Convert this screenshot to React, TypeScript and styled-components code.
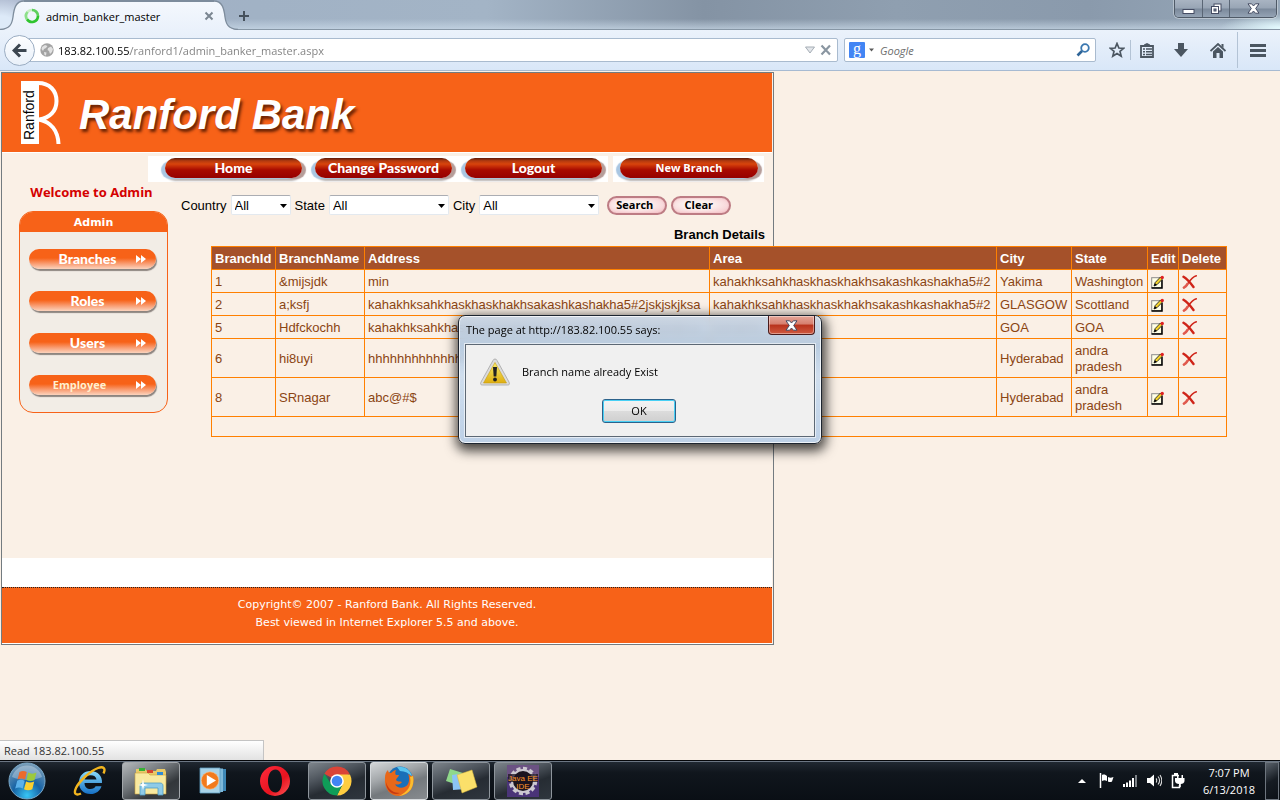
import React from "react";
import styled, { createGlobalStyle, css } from "styled-components";

const UI = `"Open Sans", "Noto Sans", sans-serif`;
const ARIAL = `"Liberation Sans", Arial, sans-serif`;
const VERDANA = `"DejaVu Sans", Verdana, sans-serif`;
const GOTHIC = `Lato, "Century Gothic", sans-serif`;
const LINEN = "#faf0e6";
const ORANGE = "#f76218";

const Global = createGlobalStyle`
  * { box-sizing: border-box; }
  html, body, #root { height: 100%; }
  body { margin: 0; background: ${LINEN}; font-family: ${ARIAL}; font-size: 13px; overflow: hidden; }
  button, input, select { font: inherit; margin: 0; }
  a { text-decoration: none; color: inherit; }
  svg { display: block; flex: none; }
`;

const Desktop = styled.div`
  display: flex;
  flex-direction: column;
  height: 100vh;
`;

/* ---------- browser chrome ---------- */

const TitleBar = styled.header`
  display: flex;
  align-items: flex-start;
  height: 30px;
  background:
    radial-gradient(ellipse 60px 14px at 100% 28px, #e4fbff, rgba(228, 251, 255, 0)),
    radial-gradient(ellipse 50px 34px at 0 26px, #ddeaf8 30%, rgba(221, 234, 248, 0)),
    linear-gradient(180deg, rgba(255, 255, 255, 0) 65%, rgba(206, 222, 236, 0.65)),
    linear-gradient(90deg, #a3aec6, #a1b2c5 20%, #a3b4c6 38%, #8493a4 55%, #8f9fb0 70%, #8a9aac 85%, #97a8b9);
  border-bottom: 1px solid #8797a6;
`;

const Tab = styled.div`
  display: flex;
  height: 30px;
  font-family: ${UI};
  font-size: 11px;
  color: #000;
`;

const TabBody = styled.div`
  display: flex;
  align-items: center;
  gap: 6px;
  width: 190px;
  height: 30px;
  background: linear-gradient(#f4f8fd, #eaf1fb);
  border-top: 2px solid #7d8c9c;
`;

const TabTitle = styled.span`
  flex: 1;
  white-space: nowrap;
  font-size: 11px;
`;

const PlainButton = styled.button`
  display: flex;
  align-items: center;
  justify-content: center;
  padding: 0;
  border: 0;
  background: none;
`;

const NewTab = styled(PlainButton)`
  width: 12px;
  height: 30px;
  padding-top: 2px;
`;

const WindowControls = styled.div`
  display: flex;
  margin-left: auto;
  margin-right: 3px;
  height: 18px;
  border: 1px solid #4f5a67;
  border-top: 0;
  border-radius: 0 0 5px 5px;
  box-shadow: 0 0 0 1px rgba(255, 255, 255, 0.35);
`;

const WindowButton = styled(PlainButton)<{ $w: number }>`
  width: ${(p) => p.$w}px;
  height: 17px;
  background: linear-gradient(#a9b4c2 0, #98a5b5 48%, #7b899b 52%, #94a3b4);
  & + & { border-left: 1px solid #5a6675; }
  &:last-child { border-radius: 0 0 4px 0; }
  &:first-child { border-radius: 0 0 0 4px; }
`;

const NavBar = styled.nav`
  display: flex;
  align-items: center;
  height: 41px;
  padding: 0 2px 0 4px;
  background: linear-gradient(#ebf2fb, #d9e7f8);
  border-bottom: 1px solid #a6bad2;
  font-family: ${UI};
  font-size: 11px;
`;

const BackButton = styled(PlainButton)`
  z-index: 1;
  width: 31px;
  height: 31px;
  margin-right: -8px;
  border: 1px solid #9badc2;
  border-radius: 50%;
  background: linear-gradient(#fdfeff, #e9f0f9);
`;

const Field = styled.div`
  display: flex;
  align-items: center;
  height: 24px;
  border: 1px solid #a9bbcf;
  border-radius: 2px;
  background: #fff;
`;

const UrlField = styled(Field)`
  flex: 1;
  gap: 4px;
  padding: 0 6px 0 12px;
`;

const UrlInput = styled.input`
  flex: 1;
  min-width: 0;
  padding: 0;
  border: 0;
  outline: 0;
  background: linear-gradient(90deg, #000 72px, #7e7e7e 72px) text;
  -webkit-text-fill-color: transparent;
`;

const SearchField = styled(Field)`
  width: 252px;
  margin: 0 8px 0 6px;
  padding: 0 4px;
  gap: 4px;
`;

const SearchInput = styled.input`
  flex: 1;
  min-width: 0;
  padding: 0 0 0 2px;
  border: 0;
  outline: 0;
  background: none;
  font-style: italic;
  &::placeholder { color: #6d6d6d; opacity: 1; }
`;

const NavIcons = styled.div`
  display: flex;
  align-items: center;
  height: 100%;
`;

const NavIcon = styled(PlainButton)<{ $w: number }>`
  width: ${(p) => p.$w}px;
  height: 26px;
`;

const NavRule = styled.span<{ $full?: boolean }>`
  width: 1px;
  height: ${(p) => (p.$full ? "36px" : "20px")};
  background: #b3c3d5;
`;

/* ---------- page ---------- */

const Viewport = styled.main`
  position: relative;
  flex: 1;
  min-height: 0;
  overflow: hidden;
  padding: 1px;
`;

const Site = styled.div`
  width: 100%;
  max-width: 773px;
  border: 1px solid #737b80;
  padding-right: 1px;
`;

const Banner = styled.div`
  display: flex;
  align-items: center;
  gap: 15px;
  height: 80px;
  padding-left: 18px;
  background: ${ORANGE};
  border-bottom: 1px solid #fff;
`;

const BankName = styled.h1`
  margin: 4px 0 0;
  color: #fff;
  font: italic bold 42px/48px ${ARIAL};
  text-shadow: 2px 3px 3px rgba(80, 24, 0, 0.85);
`;

const MenuRow = styled.div`
  display: flex;
  gap: 5px;
  padding: 3px 0 0 146px;
`;

const MenuStrip = styled.div`
  display: flex;
  height: 26px;
  padding: 0 0 0 10px;
  background: #fff;
`;

const MenuSlot = styled.span<{ $compact?: boolean }>`
  display: flex;
  width: ${(p) => (p.$compact ? "151px" : "150px")};
  padding: 2px 6px 0 7px;
  background: #fff;
`;

const pill = css`
  display: flex;
  align-items: center;
  justify-content: center;
  height: 20px;
  border-radius: 10px;
  cursor: pointer;
`;

const MenuPill = styled.a<{ $small?: boolean }>`
  ${pill}
  flex: 1;
  border: 0;
  padding: 0;
  background: linear-gradient(#5c1a08 0, #b23a10 14%, #d8440c 30%, #a80a00 60%, #950000);
  box-shadow: -5px 2px 1px -1px #a9c6e2, 5px 2px 1px -1px #b59c98, 0 3px 2px #b9b4b2;
  color: #fff;
  font: ${(p) => (p.$small ? `bold 11px/16px ${UI}` : `900 14px/16px ${GOTHIC}`)};
`;

const Columns = styled.div`
  display: flex;
  gap: 13px;
  height: 376px;
  padding-left: 17px;
`;

const Sidebar = styled.aside`
  flex: none;
  width: 149px;
`;

const Welcome = styled.p`
  margin: 0;
  padding: 2px 4px 11px 0;
  text-align: center;
  color: #d40000;
  white-space: nowrap;
  font: bold 13px/16px ${UI};
`;

const Panel = styled.section`
  height: 202px;
  border: 1px solid ${ORANGE};
  border-radius: 14px;
  background: #f2ede6;
  overflow: hidden;
`;

const PanelTitle = styled.h2`
  margin: 0 0 17px;
  height: 20px;
  background: ${ORANGE};
  color: #fff;
  text-align: center;
  font: bold 11px/22px ${VERDANA};
`;

const PanelList = styled.ul`
  display: flex;
  flex-direction: column;
  gap: 22px;
  margin: 0;
  padding: 0 11px 0 9px;
  list-style: none;
`;

const PanelLink = styled.a<{ $warm?: boolean }>`
  ${pill}
  position: relative;
  padding-right: ${(p) => (p.$warm ? "26px" : "10px")};
  background: linear-gradient(${ORANGE} 0, ${ORANGE} 45%, #f9a077 75%, #fbd3bd);
  box-shadow: 1px 2px 1px #8d8580;
  color: ${(p) => (p.$warm ? "#fff0cf" : "#fff")};
  font: ${(p) => (p.$warm ? `bold 11px/18px ${UI}` : `900 14px/18px ${GOTHIC}`)};
  svg { position: absolute; right: 10px; top: 6px; }
`;

const Content = styled.section`
  flex: 1;
  min-width: 0;
  padding-top: 13px;
`;

const Filters = styled.form`
  display: flex;
  align-items: center;
  height: 20px;
  white-space: nowrap;
`;

const FilterLabel = styled.label`
  margin-right: 4px;
`;

const SelectBox = styled.span<{ $w: number }>`
  position: relative;
  width: ${(p) => p.$w}px;
  margin-right: 4px;
  svg { position: absolute; right: 4px; top: 9px; pointer-events: none; }
`;

const Select = styled.select`
  appearance: none;
  display: block;
  width: 100%;
  height: 20px;
  padding: 0 3px;
  border: 1px solid #e3e9ef;
  border-top-color: #abadb3;
  border-radius: 2px;
  background: #fff;
  color: #000;
`;

const PinkButton = styled.button`
  ${pill}
  width: 60px;
  height: 19px;
  margin-left: 4px;
  padding: 0 5px 0 0;
  border: 2px solid #bd7c84;
  background: radial-gradient(ellipse at 45% 45%, #fdf3f1 30%, #f5c9cd 90%);
  box-shadow: inset 0 0 2px #f1b6bd;
  color: #000;
  font: bold 11px/14px ${UI};
`;

const Caption = styled.h2`
  margin: 12px 7px 3px 0;
  text-align: right;
  font: bold 13px/16px ${ARIAL};
  color: #000;
`;

const Grid = styled.table`
  width: 1015px;
  margin-left: 30px;
  table-layout: fixed;
  border-collapse: collapse;
  background: ${LINEN};
  color: #8b4513;
  font: 13px/16px ${ARIAL};
  th, td { border: 1px solid #ff8000; padding: 4px 3px 2px; text-align: left; }
  th { background: #a5512a; color: #fff; white-space: nowrap; }
`;

const Cell = styled.td<{ $wrap?: boolean }>`
  white-space: ${(p) => (p.$wrap ? "normal" : "nowrap")};
  overflow: hidden;
`;

const PagerCell = styled.td`
  height: 20px;
`;

const Spacer = styled.div`
  height: 29px;
  background: #fff;
`;

const Footer = styled.footer`
  height: 57px;
  padding-top: 8px;
  border-top: 1px dotted #222;
  border-bottom: 1px solid #fff;
  background: ${ORANGE};
  color: #fff;
  text-align: center;
  font: 11px/18px ${VERDANA};
`;

const Line = styled.p`
  margin: 0;
`;

const StatusBar = styled.div`
  position: absolute;
  left: 0;
  bottom: 0;
  width: 264px;
  height: 20px;
  padding-left: 4px;
  border: 1px solid #c4c4c4;
  border-width: 1px 1px 0 0;
  background: linear-gradient(#fff, #e2e2e2);
  color: #333;
  font: 11px/20px ${UI};
`;

/* ---------- alert ---------- */

const Dialog = styled.div`
  position: absolute;
  z-index: 2;
  left: 50%;
  top: 244px;
  width: 364px;
  margin-left: -182px;
  padding: 0 6px;
  border: 1px solid #1d2530;
  border-radius: 7px;
  background: linear-gradient(rgba(196, 211, 229, 0.86), rgba(176, 199, 223, 0.88) 30px, rgba(205, 221, 238, 0.95) 60px, #bdd0e6);
  backdrop-filter: blur(4px);
  box-shadow: inset 0 0 0 1px rgba(255, 255, 255, 0.75), 1px 4px 12px 3px rgba(0, 0, 0, 0.72);
  padding-bottom: 6px;
  font: 11px/16px ${UI};
  color: #000;
`;

const DialogHead = styled.div`
  display: flex;
  align-items: flex-start;
  justify-content: space-between;
  height: 28px;
`;

const DialogTitle = styled.span`
  padding: 6px 0 0 1px;
  white-space: nowrap;
`;

const DialogClose = styled(PlainButton)`
  width: 47px;
  height: 19px;
  border: 1px solid #4a1b1b;
  border-top: 0;
  border-radius: 0 0 4px 4px;
  background: linear-gradient(#e5a698 0, #d67e6e 45%, #b8321c 50%, #cf5a41);
  box-shadow: inset 0 0 0 1px rgba(255, 255, 255, 0.4);
`;

const DialogBody = styled.div`
  height: 93px;
  padding: 13px 16px 0 14px;
  border: 1px solid #5d6874;
  background: #f0f0f0;
  box-shadow: 0 0 0 1px rgba(255, 255, 255, 0.6);
`;

const DialogMessage = styled.div`
  display: flex;
  align-items: center;
  gap: 12px;
  height: 28px;
`;

const OkButton = styled.button`
  display: block;
  width: 74px;
  height: 24px;
  margin: 13px auto 0;
  padding: 0;
  border: 1px solid #2c628b;
  border-radius: 3px;
  background: linear-gradient(#f3f3f3 0, #ebebeb 50%, #dcdcdc 50%, #cfcfcf);
  box-shadow: inset 0 0 0 1px #48d0f5;
  color: #000;
`;

/* ---------- taskbar ---------- */

const TaskBar = styled.footer`
  display: flex;
  align-items: center;
  gap: 4px;
  height: 40px;
  padding-right: 1px;
  border-top: 1px solid #05070a;
  box-shadow: inset 0 1px 0 #6b7683;
  background: linear-gradient(#222a33 0, #10161d 30%, #0a0f15);
`;

const TaskButton = styled.button<{ $state?: "open" | "active" | "light" }>`
  display: flex;
  align-items: center;
  justify-content: center;
  width: 58px;
  height: 38px;
  padding: 0;
  border: 1px solid transparent;
  border-radius: 3px;
  background: none;
  ${(p) => p.$state === "open" && css`
    border-color: #8e959c;
    background: linear-gradient(160deg, #7d848b 0, #4d545c 35%, #262c33 60%, #2f363e);
  `}
  ${(p) => p.$state === "light" && css`
    border-color: #a3a7ab;
    background: linear-gradient(150deg, #b4b8bb 0, #72777b 40%, #33373b 70%, #3c4146);
  `}
  ${(p) => p.$state === "active" && css`
    border-color: #d6dadd;
    background: linear-gradient(160deg, #d3d6d8 0, #a3a7aa 35%, #74797d 60%, #888c90);
  `}
`;

const StartButton = styled(TaskButton)`
  width: 54px;
  margin-right: 2px;
`;

const Tray = styled.div`
  display: flex;
  align-items: center;
  margin-left: auto;
`;

const TrayIcons = styled.div`
  display: flex;
  align-items: center;
  gap: 8px;
  margin-right: 7px;
`;

const TrayButton = styled(PlainButton)`
  width: 16px;
  height: 20px;
`;

const Clock = styled.div`
  width: 72px;
  text-align: center;
  color: #fff;
  font: 11px/17px ${UI};
`;

const ShowDesktop = styled.button`
  width: 14px;
  height: 38px;
  padding: 0;
  border: 1px solid #6d757e;
  background: linear-gradient(150deg, #59616a, #161c23 50%, #0c1117);
`;

/* ---------- drawings ---------- */

const TabEdge = ({ flip }: { flip?: boolean }) => (
  <svg width="24" height="30" viewBox="0 0 24 30" transform={flip ? "scale(-1 1)" : undefined}>
    <defs>
      <linearGradient id={flip ? "edgeR" : "edgeL"} x1="0" y1="0" x2="0" y2="1">
        <stop offset="0" stopColor="#f4f8fd" />
        <stop offset="1" stopColor="#eaf1fb" />
      </linearGradient>
    </defs>
    <path d="M0 30 C10 29 12 24 13 17 C14 8 16 1 24 1 L24 30 Z" fill={`url(#${flip ? "edgeR" : "edgeL"})`} />
    <path d="M0 29.500 C10 29 12 24 13 17 C14 8 16 1 24 1" fill="none" stroke="#7d8c9c" strokeWidth="1.300" />
  </svg>
);

const Spinner = () => (
  <svg width="16" height="16" viewBox="0 0 16 16" fill="none" strokeWidth="2.600">
    <circle cx="8" cy="8" r="6" stroke="#c9efc4" />
    <path d="M14 8 A6 6 0 0 1 3 11.300" stroke="#2fc42f" />
    <path d="M8 2 A6 6 0 0 1 14 8" stroke="#5fd05f" />
    <path d="M3 11.300 A6 6 0 0 1 3.500 4" stroke="#8de08a" />
  </svg>
);

const Cross = ({ size, color, w = 2 }: { size: number; color: string; w?: number }) => (
  <svg width={size} height={size} viewBox="0 0 10 10">
    <path d="M1.500 1.500 L8.500 8.500 M8.500 1.500 L1.500 8.500" stroke={color} strokeWidth={w} />
  </svg>
);

const WinX = () => (
  <svg width="13" height="11" viewBox="0 0 13 11">
    <path d="M1 .8 H4.600 L6.500 3 L8.400 .8 H12 L8.700 5.500 L12 10.200 H8.400 L6.500 8 L4.600 10.200 H1 L4.300 5.500 Z" fill="#fff" stroke="#454c63" />
  </svg>
);

const BankLogo = () => (
  <svg width="44" height="66" viewBox="0 0 44 66">
    <rect x="1" y="1" width="18" height="63" fill="#fff" />
    <path d="M18 3 C30 3 36.500 11 36.500 21 C36.500 31 30 38 19 39.500 C31 42 38 51 38.500 64" fill="none" stroke="#fff" strokeWidth="4" />
    <text transform="translate(14 60) rotate(-90)" fontFamily={ARIAL} fontSize="14" fill="#000">Ranford</text>
  </svg>
);

const Arrows = () => (
  <svg width="10" height="8" viewBox="0 0 10 8">
    <path d="M0 0 L5 4 L0 8 Z M5 0 L10 4 L5 8 Z" fill="#fff" />
  </svg>
);

const Caret = () => (
  <svg width="7" height="4" viewBox="0 0 7 4"><path d="M0 0 H7 L3.500 4 Z" fill="#000" /></svg>
);

const EditIcon = () => (
  <svg width="14" height="14" viewBox="0 0 14 14">
    <rect x=".7" y="2.700" width="10" height="10" fill="#ffffe6" stroke="#8a8a8a" />
    <path d="M.5 13 H11 V5" fill="none" stroke="#000" strokeWidth="1.500" />
    <path d="M3 11 L4.200 7.500 L9.500 2 L11.500 4 L6.200 9.500 Z" fill="#f4d32a" stroke="#222" strokeWidth=".9" />
    <path d="M3 11 L4 8.200 L5.800 10 Z" fill="#000" />
    <circle cx="11.200" cy="2.500" r="1.700" fill="#e02222" />
  </svg>
);

const DeleteIcon = () => (
  <svg width="15" height="14" viewBox="0 0 15 14">
    <path d="M1.500 1.800 C4.500 3.500 8.500 8 11.500 12" fill="none" stroke="#cf2418" strokeWidth="2.400" strokeLinecap="round" />
    <path d="M14.300 .8 C10.500 2 8 5.500 6.500 7.800 C5.300 9.600 4 11.500 2 12.600" fill="none" stroke="#cf2418" strokeWidth="1.500" strokeLinecap="round" />
    <path d="M5.500 8.800 C4.600 10.500 3.500 11.900 1.900 12.600" fill="none" stroke="#e05a4e" strokeWidth="2.600" strokeLinecap="round" />
  </svg>
);

const WarningIcon = () => (
  <svg width="30" height="28" viewBox="0 0 30 28">
    <defs>
      <linearGradient id="warn" x1="0" y1="0" x2="0" y2="1">
        <stop offset="0" stopColor="#f8ee6c" /><stop offset="1" stopColor="#dfae10" />
      </linearGradient>
    </defs>
    <path d="M15 1 C16 1 16.500 1.500 17 2.400 L29 24 C30 26.500 29 27 27.500 27 H2.500 C1 27 0 26.500 1 24 L13 2.400 C13.500 1.500 14 1 15 1 Z" fill="#dcdcdc" stroke="#a5a5a5" strokeWidth=".8" />
    <path d="M15 4.500 L26.500 25 H3.500 Z" fill="url(#warn)" stroke="#c79c12" strokeWidth=".6" />
    <path d="M13 9 H17 L16.300 18.500 H13.700 Z" fill="#222" />
    <circle cx="15" cy="21.500" r="1.900" fill="#222" />
  </svg>
);

const GlobeIcon = () => (
  <svg width="14" height="14" viewBox="0 0 14 14">
    <circle cx="7" cy="7" r="6.700" fill="#a3a3a3" />
    <path d="M2 4 L5 2 L7.500 3 L6 5 L4 6 L3 8 L1.500 6 Z M8 5 L11 3.500 L13 6 L12 9 L10 11 L9 8 L7.500 7 Z M4 9 L6.500 9.500 L6 12.500 L4.500 12 Z" fill="#e2e2e2" />
  </svg>
);

const StartOrb = () => (
  <svg width="38" height="38" viewBox="0 0 38 38">
    <defs>
      <radialGradient id="orb" cx=".5" cy=".9" r=".9">
        <stop offset="0" stopColor="#37c6f5" /><stop offset=".45" stopColor="#1763a5" /><stop offset="1" stopColor="#7d9fb8" />
      </radialGradient>
    </defs>
    <circle cx="19" cy="19" r="18" fill="url(#orb)" stroke="#7aa9c9" />
    <path d="M4 15 A15.500 15.500 0 0 1 34 15 C26 19 12 19 4 15 Z" fill="#fff" opacity=".3" />
    <path d="M11.500 10 C14 8.500 16.500 8.700 18.800 10 L17 17.500 C14.500 16.200 12 16.200 9.500 17.500 Z" fill="#ec6a2c" />
    <path d="M20.200 10.600 C23 12 25.500 12 28.500 10.500 L26.500 18 C24 19.400 21 19.400 18.400 18 Z" fill="#9cc93d" />
    <path d="M9.200 18.800 C11.500 17.500 14.200 17.500 16.700 18.800 L14.700 26.500 C12.500 25.200 9.500 25.200 7.200 26.500 Z" fill="#5bb1ea" />
    <path d="M18.100 19.600 C20.500 20.900 23.500 20.900 26.200 19.600 L24.300 27.200 C21.500 28.600 18.500 28.500 16 27.200 Z" fill="#fcd02f" />
  </svg>
);

const IeIcon = () => (
  <svg width="34" height="32" viewBox="0 0 34 32">
    <defs>
      <linearGradient id="ie" x1="0" y1="0" x2="0" y2="1">
        <stop offset="0" stopColor="#8bdcfb" /><stop offset="1" stopColor="#1570c5" />
      </linearGradient>
    </defs>
    <path d="M30 18 H12.500 C12.700 22 15 24 18.500 24 C21 24 22.600 23 23.600 21.200 H29.500 C28 26 24 29 18.500 29 C11.500 29 7 24.300 7 17.500 C7 10.500 12 6 18.500 6 C26 6 30.500 11 30 18 Z M12.600 14.500 H24.500 C24.200 11.800 21.800 10.300 18.700 10.300 C15.500 10.300 13.200 11.800 12.600 14.500 Z" fill="url(#ie)" />
    <path d="M31.500 8.500 C34 3.500 31.500 .8 26 3 C18 6 7.500 16 4 23 C1.500 28.500 3.500 31 9 28.500" fill="none" stroke="#f2b51e" strokeWidth="2.400" />
  </svg>
);

const ExplorerIcon = () => (
  <svg width="34" height="30" viewBox="0 0 34 30">
    <path d="M2 3 H11 L13 5 H22 L23 3 H31 L32 6 V27 H2 Z" fill="#e9ca68" />
    <path d="M1 7 H14 L16 9 H32 V28 H1 Z" fill="#f8e9a0" stroke="#c9a13e" strokeWidth=".6" />
    <rect x="5" y="2" width="6" height="3" fill="#35b135" /><rect x="13" y="4" width="6" height="3" fill="#d6452f" /><rect x="23" y="6" width="6" height="3" fill="#2f8bd6" />
    <path d="M6 29 V20 C6 18 7 17 9 17 H26 C28 17 29 18 29 20 V29 H24 V22 H11 V29 Z" fill="#8fcbe8" stroke="#4e9cc5" strokeWidth=".8" />
    <path d="M9 13 L10 18 L14 19 L10 20 L9 24 L8 20 L4 19 L8 18 Z" fill="#fff" />
  </svg>
);

const MediaIcon = () => (
  <svg width="28" height="27" viewBox="0 0 28 27">
    <path d="M8 2 H27 V24 H8 Z" fill="#3e87b5" /><path d="M5 1.500 H24 V25 H5 Z" fill="#7fb9d9" /><path d="M1 1 H21 V26 H1 Z" fill="#a8d3e8" stroke="#5f9fc2" strokeWidth=".8" />
    <circle cx="11" cy="13.500" r="8.700" fill="#f27a1c" stroke="#fbc28a" strokeWidth=".6" />
    <path d="M7.800 8 L17 13.500 L7.800 19 Z" fill="#fff" />
  </svg>
);

const OperaIcon = () => (
  <svg width="32" height="32" viewBox="0 0 32 32">
    <defs>
      <linearGradient id="op" x1="0" y1="0" x2="1" y2="1">
        <stop offset="0" stopColor="#ff2b3d" /><stop offset=".6" stopColor="#e8131f" /><stop offset="1" stopColor="#ff5a5a" />
      </linearGradient>
    </defs>
    <path fillRule="evenodd" d="M16 1 A15 15 0 1 0 16 31 A15 15 0 1 0 16 1 Z M16.500 4.500 C21 4.500 23 10 23 16 C23 22 21 27.500 16.500 27.500 C11.500 27.500 9 22 9 16 C9 10 11.500 4.500 16.500 4.500 Z" fill="url(#op)" />
  </svg>
);

const ChromeIcon = () => (
  <svg width="30" height="30" viewBox="0 0 30 30">
    <path d="M15 15 L2.440 7.750 A14.500 14.500 0 0 1 27.560 7.750 Z" fill="#db4437" />
    <path d="M15 8.500 H27.970 A14.500 14.500 0 0 1 15 29.500 L20.600 18.200 Z" fill="#ffcd40" />
    <path d="M2.440 7.750 A14.500 14.500 0 0 0 15 29.500 L20.600 18.200 L9.400 18.200 Z" fill="#0f9d58" />
    <circle cx="15" cy="15" r="6.800" fill="#fff" /><circle cx="15" cy="15" r="5.300" fill="#4285f4" />
  </svg>
);

const FirefoxIcon = () => (
  <svg width="32" height="32" viewBox="0 0 32 32">
    <circle cx="17" cy="14" r="12.500" fill="#1a6fb8" />
    <path d="M14 2 C20 1 28 4 29 12 C26 8 22 6 17 6 Z" fill="#5bc4ee" />
    <path d="M2 13 C2 9 3 7 5 5 C5 7 6 8 8 8 C10 6 12 5 13 5 C12 7 12 9 13 10 H16 C16 12 13 13 13 15 C14 17 17 16 19 17 C17 20 13 20 12 19 C14 24 22 24 25 19 C27 15 26 11 25 9 C28 10 29 13 30 10 C32 20 28 30 16 31 C7 31 1 24 2 13 Z" fill="#e8681a" />
    <path d="M30 11 C32 21 27 30 16 31 C24 27 29 22 27 12 Z" fill="#fbbd2e" />
    <path d="M3 17 C5 25 11 28 17 28 C11 31 3 27 3 17 Z" fill="#c73a12" />
  </svg>
);

const NotesIcon = () => (
  <svg width="34" height="28" viewBox="0 0 34 28">
    <path d="M6 2 L19 6 L14 18 L2 14 Z" fill="#8fd88a" />
    <path d="M8 8 L20 6 L22 22 L9 23 Z" fill="#8cc4f4" />
    <path d="M13 8 L28 3 L33 20 L18 26 Z" fill="#fbe06a" stroke="#d9b53a" strokeWidth=".5" />
  </svg>
);

const EclipseIcon = () => (
  <svg width="32" height="32" viewBox="0 0 32 32">
    <rect width="32" height="32" fill="#4a3478" />
    <rect width="32" height="12" fill="#6b5283" />
    <circle cx="16" cy="16" r="12.500" fill="none" stroke="#ccc8d0" strokeWidth="3.500" strokeDasharray="4 2.500" />
    <circle cx="16" cy="16" r="11" fill="#1c1420" stroke="#ccc8d0" strokeWidth="2" />
    <rect x="1" y="9" width="30" height="8" fill="#1c1420" opacity=".75" />
    <text x="16" y="16" textAnchor="middle" fontFamily={ARIAL} fontSize="8" fill="#ff9428">Java EE</text>
    <text x="16" y="24" textAnchor="middle" fontFamily={ARIAL} fontSize="8" fill="#ff9428">IDE</text>
  </svg>
);

const headings = ["BranchId", "BranchName", "Address", "Area", "City", "State", "Edit", "Delete"];
const widths = [64, 89, 345, 287, 75, 76, 31, 48];
const LONG = "kahakhksahkhaskhaskhakhsakashkashakha5#2";
const branches = [
  ["1", "&mijsjdk", "min", LONG, "Yakima", "Washington"],
  ["2", "a;ksfj", LONG + "jskjskjksa", LONG, "GLASGOW", "Scottland"],
  ["5", "Hdfckochh", LONG + "jskjskjksa", "kahakhk", "GOA", "GOA"],
  ["6", "hi8uyi", "hhhhhhhhhhhhhhhhhhhhhhhh", "", "Hyderabad", "andra pradesh"],
  ["8", "SRnagar", "abc@#$", "", "Hyderabad", "andra pradesh"],
];

const filters = [
  { id: "country", label: "Country", w: 60 },
  { id: "state", label: "State", w: 120 },
  { id: "city", label: "City", w: 120 },
];

const ink = "#4b5661";

export default function App() {
  return (
    <Desktop>
      <Global />
      <TitleBar>
        <Tab>
          <TabEdge />
          <TabBody>
            <Spinner />
            <TabTitle>admin_banker_master</TabTitle>
            <PlainButton aria-label="Close tab"><Cross size={10} color="#7b8691" /></PlainButton>
          </TabBody>
          <TabEdge flip />
        </Tab>
        <NewTab aria-label="New tab">
          <svg width="12" height="12" viewBox="0 0 12 12"><path d="M6 1 V11 M1 6 H11" stroke="#46515c" strokeWidth="2" /></svg>
        </NewTab>
        <WindowControls>
          <WindowButton $w={27} aria-label="Minimize">
            <svg width="13" height="12" viewBox="0 0 13 12"><rect x="1" y="6.500" width="11" height="4" fill="#fff" stroke="#454c63" /></svg>
          </WindowButton>
          <WindowButton $w={27} aria-label="Restore">
            <svg width="13" height="12" viewBox="0 0 13 12">
              <rect x="4" y="1" width="7" height="7" fill="#fff" stroke="#454c63" />
              <rect x="1.500" y="3.500" width="7" height="7" fill="#fff" stroke="#454c63" /><rect x="4" y="6" width="2" height="2" fill="#8796a8" stroke="#454c63" />
            </svg>
          </WindowButton>
          <WindowButton $w={47} aria-label="Close"><WinX /></WindowButton>
        </WindowControls>
      </TitleBar>

      <NavBar>
        <BackButton aria-label="Back">
          <svg width="15" height="15" viewBox="0 0 15 15"><path d="M8 1.500 L2 7.500 L8 13.500 M2.500 7.500 H14.500" fill="none" stroke="#3c4650" strokeWidth="3" /></svg>
        </BackButton>
        <UrlField>
          <GlobeIcon />
          <UrlInput aria-label="Address" defaultValue="183.82.100.55/ranford1/admin_banker_master.aspx" />
          <svg width="26" height="12" viewBox="0 0 26 12">
            <path d="M.5 3 H9.500 L5 9 Z" fill="#e3e6ea" stroke="#a5adb5" />
            <path d="M16.500 1.500 L25 10.500 M25 1.500 L16.500 10.500" stroke="#8a96a1" strokeWidth="2.200" />
          </svg>
        </UrlField>
        <SearchField>
          <svg width="25" height="16" viewBox="0 0 25 16">
            <rect width="16" height="16" rx="1" fill="#4285f4" />
            <text x="8" y="12" textAnchor="middle" fontFamily="Liberation Serif, serif" fontSize="16" fill="#fff">g</text>
            <path d="M20 6.500 H25 L22.500 9.500 Z" fill="#5a5a5a" />
          </svg>
          <SearchInput aria-label="Search the web" placeholder="Google" />
          <svg width="15" height="14" viewBox="0 0 15 14"><circle cx="9" cy="5" r="3.800" fill="none" stroke="#3b78b0" strokeWidth="1.800" /><path d="M6 8 L1.500 12.500" stroke="#2f6598" strokeWidth="2.600" /></svg>
        </SearchField>
        <NavIcons>
          <NavIcon $w={26} aria-label="Bookmark">
            <svg width="16" height="16" viewBox="0 0 16 16"><path d="M8 1.500 L9.900 6 L14.700 6.300 L11 9.400 L12.200 14.200 L8 11.600 L3.800 14.200 L5 9.400 L1.300 6.300 L6.100 6 Z" fill="none" stroke={ink} strokeWidth="1.700" /></svg>
          </NavIcon>
          <NavRule />
          <NavIcon $w={32} aria-label="Bookmarks list">
            <svg width="14" height="15" viewBox="0 0 14 15"><path d="M1 3 H13 V14 H1 Z" fill="none" stroke={ink} strokeWidth="1.800" /><path d="M4 3 V1.500 L7 0 L10 1.500 V3 Z" fill={ink} /><path d="M3 6 H5 M6 6 H12 M3 8.700 H5 M6 8.700 H12 M3 11.400 H5 M6 11.400 H12" stroke={ink} strokeWidth="1.500" /></svg>
          </NavIcon>
          <NavIcon $w={36} aria-label="Downloads">
            <svg width="14" height="14" viewBox="0 0 14 14"><path d="M4 0 H10 V6 H14 L7 14 L0 6 H4 Z" fill={ink} /></svg>
          </NavIcon>
          <NavIcon $w={38} aria-label="Home page">
            <svg width="16" height="15" viewBox="0 0 16 15"><path d="M.5 8 L8 1 L15.500 8" fill="none" stroke={ink} strokeWidth="1.800" /><path d="M11.500 1 H13.500 V5 L11.500 3 Z M3 8.500 L8 4 L13 8.500 V15 H9.500 V10 H6.500 V15 H3 Z" fill={ink} /></svg>
          </NavIcon>
          <NavRule $full />
          <NavIcon $w={40} aria-label="Menu">
            <svg width="16" height="13" viewBox="0 0 16 13"><path d="M0 1.500 H16 M0 6.500 H16 M0 11.500 H16" stroke={ink} strokeWidth="3" /></svg>
          </NavIcon>
        </NavIcons>
      </NavBar>

      <Viewport>
        <Site>
          <Banner>
            <BankLogo />
            <BankName>Ranford Bank</BankName>
          </Banner>
          <MenuRow>
            <MenuStrip>
              {["Home", "Change Password", "Logout"].map((t) => (
                <MenuSlot key={t}><MenuPill href="#">{t}</MenuPill></MenuSlot>
              ))}
            </MenuStrip>
            <MenuSlot $compact><MenuPill as="button" $small>New Branch</MenuPill></MenuSlot>
          </MenuRow>
          <Columns>
            <Sidebar>
              <Welcome>Welcome to Admin</Welcome>
              <Panel>
                <PanelTitle>Admin</PanelTitle>
                <PanelList>
                  {["Branches", "Roles", "Users", "Employee"].map((t) => (
                    <li key={t}><PanelLink href="#" $warm={t === "Employee"}>{t}<Arrows /></PanelLink></li>
                  ))}
                </PanelList>
              </Panel>
            </Sidebar>
            <Content>
              <Filters>
                {filters.map((f) => (
                  <React.Fragment key={f.id}>
                    <FilterLabel htmlFor={f.id}>{f.label}</FilterLabel>
                    <SelectBox $w={f.w}>
                      <Select id={f.id}><option>All</option></Select>
                      <Caret />
                    </SelectBox>
                  </React.Fragment>
                ))}
                <PinkButton type="button">Search</PinkButton>
                <PinkButton type="button">Clear</PinkButton>
              </Filters>
              <Caption>Branch Details</Caption>
              <Grid>
                <colgroup>{widths.map((w, i) => <col key={i} width={w} />)}</colgroup>
                <thead>
                  <tr>{headings.map((h) => <th key={h} scope="col">{h}</th>)}</tr>
                </thead>
                <tbody>
                  {branches.map((row) => (
                    <tr key={row[0]}>
                      {row.map((v, i) => <Cell key={i} $wrap={i === 5}>{v}</Cell>)}
                      <Cell><PlainButton aria-label="Edit"><EditIcon /></PlainButton></Cell>
                      <Cell><PlainButton aria-label="Delete"><DeleteIcon /></PlainButton></Cell>
                    </tr>
                  ))}
                  <tr><PagerCell colSpan={8} /></tr>
                </tbody>
              </Grid>
            </Content>
          </Columns>
          <Spacer />
          <Footer>
            <Line>Copyright© 2007 - Ranford Bank. All Rights Reserved.</Line>
            <Line>Best viewed in Internet Explorer 5.5 and above.</Line>
          </Footer>
        </Site>

        <Dialog role="alertdialog" aria-labelledby="alert-title">
          <DialogHead>
            <DialogTitle id="alert-title">The page at http://183.82.100.55 says:</DialogTitle>
            <DialogClose aria-label="Close dialog"><WinX /></DialogClose>
          </DialogHead>
          <DialogBody>
            <DialogMessage><WarningIcon />Branch name already Exist</DialogMessage>
            <OkButton>OK</OkButton>
          </DialogBody>
        </Dialog>
        <StatusBar>Read 183.82.100.55</StatusBar>
      </Viewport>

      <TaskBar>
        <StartButton aria-label="Start"><StartOrb /></StartButton>
        <TaskButton aria-label="Internet Explorer"><IeIcon /></TaskButton>
        <TaskButton $state="light" aria-label="Windows Explorer"><ExplorerIcon /></TaskButton>
        <TaskButton aria-label="Media Player"><MediaIcon /></TaskButton>
        <TaskButton aria-label="Opera"><OperaIcon /></TaskButton>
        <TaskButton $state="open" aria-label="Chrome"><ChromeIcon /></TaskButton>
        <TaskButton $state="active" aria-label="Firefox"><FirefoxIcon /></TaskButton>
        <TaskButton $state="open" aria-label="Sticky Notes"><NotesIcon /></TaskButton>
        <TaskButton $state="open" aria-label="Eclipse"><EclipseIcon /></TaskButton>
        <Tray>
          <TrayIcons>
            <TrayButton aria-label="Show hidden icons">
              <svg width="8" height="4" viewBox="0 0 8 4"><path d="M0 4 L4 0 L8 4 Z" fill="#fff" /></svg>
            </TrayButton>
            <TrayButton aria-label="Action Center">
              <svg width="15" height="15" viewBox="0 0 15 15"><path d="M1.500 0 V15" stroke="#fff" strokeWidth="1.500" /><path d="M3 2 C5 1 7 2 8 3 V8 C6 7 5 7 3 8 Z M9 4 C11 5 12 5 14.500 4 L13 8.500 C11.500 9.500 10 9 9 8.500 Z" fill="#fff" /></svg>
            </TrayButton>
            <TrayButton aria-label="Network">
              <svg width="14" height="12" viewBox="0 0 14 12"><path d="M1 9 V12 M4 7.500 V12 M7 5.500 V12 M10 3 V12" stroke="#fff" strokeWidth="2" /><path d="M13 0 V12" stroke="#7d8287" strokeWidth="2" /></svg>
            </TrayButton>
            <TrayButton aria-label="Volume">
              <svg width="15" height="13" viewBox="0 0 15 13"><path d="M0 4 H3 L7 .5 V12.500 L3 9 H0 Z" fill="#fff" /><path d="M9 4.500 C10 5.500 10 7.500 9 8.500 M11 2.500 C13 5 13 8 11 10.500 M13 1 C15.300 4.500 15.300 8.500 13 12" fill="none" stroke="#ddd" strokeWidth="1.100" /></svg>
            </TrayButton>
            <TrayButton aria-label="Power">
              <svg width="14" height="16" viewBox="0 0 14 16"><path d="M8 2.500 H1.500 V14.500 H8.500 V12" fill="none" stroke="#fff" strokeWidth="1.500" /><path d="M3 0 H7 V2 H3 Z M4 5 H13.500 V8 C13.500 10 11.500 11 9.800 11 V14 H8 V11 C6 11 4 10 4 8 Z M6 2 H7.500 V5 H6 Z M10.500 2 H12 V5 H10.500 Z" fill="#fff" /></svg>
            </TrayButton>
          </TrayIcons>
          <Clock>7:07 PM<br />6/13/2018</Clock>
          <ShowDesktop aria-label="Show desktop" />
        </Tray>
      </TaskBar>
    </Desktop>
  );
}
